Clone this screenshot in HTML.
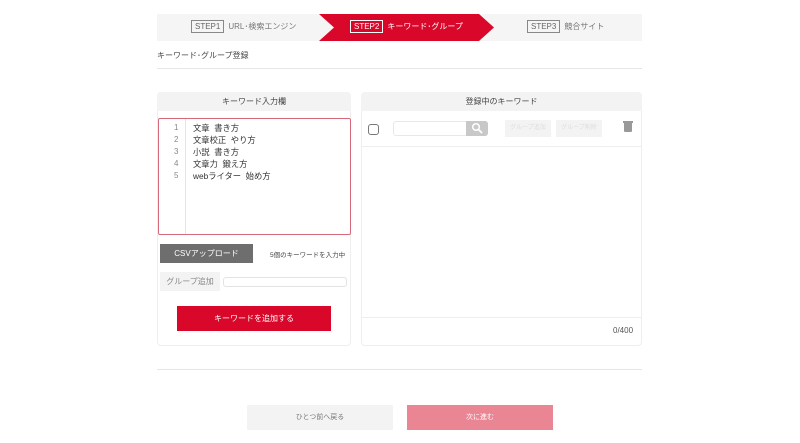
<html><head><style>
body{margin:0;width:800px;height:443px;background:#fff;font-family:"Liberation Sans","Noto Sans CJK JP",sans-serif;position:relative;overflow:hidden;color:#444}
.a{position:absolute;box-sizing:border-box}
.st{font-size:8px;display:flex;align-items:center;gap:4px}
.bx{border:1px solid #888;padding:1px 3px;font-size:8px;color:#666}
</style></head><body>
<div class="a" style="left:157px;top:14px;width:485px;height:27px;background:#f5f5f6"></div>
<svg class="a" style="left:319px;top:14px" width="176" height="27"><polygon points="0,0 160,0 175,13.5 160,27 0,27 15,13.5" fill="#d9072a"/></svg>
<div class="a st" style="left:191px;top:20px;color:#777"><span class="bx">STEP1</span>URL･検索エンジン</div>
<div class="a st" style="left:350px;top:20px;color:#fff"><span class="bx" style="border-color:#fff;color:#fff">STEP2</span>キーワード･グループ</div>
<div class="a st" style="left:527px;top:20px;color:#777"><span class="bx">STEP3</span>競合サイト</div>
<div class="a" style="left:157px;top:50px;font-size:8px;color:#444">キーワード･グループ登録</div>
<div class="a" style="left:157px;top:68px;width:485px;height:1px;background:#e6e6e6"></div>

<div class="a" style="left:157px;top:92px;width:194px;height:254px;border:1px solid #eee;border-radius:4px"></div>
<div class="a" style="left:157px;top:92px;width:194px;height:19px;background:#f3f3f4;border-radius:4px 4px 0 0;font-size:8px;text-align:center;line-height:19px">キーワード入力欄</div>
<div class="a" style="left:158px;top:118px;width:193px;height:117px;border:1px solid #d66a7a;border-radius:2px"></div>
<div class="a" style="left:185px;top:119px;width:1px;height:115px;background:#e4e4e4"></div>
<div class="a" style="left:174px;top:122px;font-size:8px;line-height:12px;color:#888;text-align:right">1<br>2<br>3<br>4<br>5</div>
<div class="a" style="left:193px;top:122px;font-size:8.3px;line-height:12px;color:#333;white-space:pre">文章  書き方
文章校正  やり方
小説  書き方
文章力  鍛え方
webライター  始め方</div>
<div class="a" style="left:160px;top:244px;width:93px;height:19px;background:#6e6e6e;color:#fff;font-size:8px;text-align:center;line-height:19px">CSVアップロード</div>
<div class="a" style="left:270px;top:249px;font-size:6.5px;color:#444">5個のキーワードを入力中</div>
<div class="a" style="left:160px;top:272px;width:60px;height:19px;background:#f3f3f4;color:#888;font-size:8px;text-align:center;line-height:19px">グループ追加</div>
<div class="a" style="left:223px;top:277px;width:124px;height:10px;border:1px solid #e3e3e3;border-radius:3px"></div>
<div class="a" style="left:177px;top:306px;width:154px;height:25px;background:#d9072a;color:#fff;font-size:8px;text-align:center;line-height:25px">キーワードを追加する</div>

<div class="a" style="left:361px;top:92px;width:281px;height:254px;border:1px solid #eee;border-radius:4px"></div>
<div class="a" style="left:361px;top:92px;width:281px;height:19px;background:#f3f3f4;border-radius:4px 4px 0 0;font-size:8px;text-align:center;line-height:19px">登録中のキーワード</div>
<div class="a" style="left:368px;top:124px;width:11px;height:11px;border:1px solid #777;border-radius:3px"></div>
<div class="a" style="left:393px;top:121px;width:95px;height:15px;border:1px solid #e8e8e8;border-radius:3px"></div>
<div class="a" style="left:466px;top:121px;width:22px;height:15px;background:#c8c8c8;border-radius:0 3px 3px 0"></div>
<svg class="a" style="left:471px;top:122px" width="12" height="12"><circle cx="5" cy="5" r="3.3" stroke="#fff" stroke-width="1.5" fill="none"/><line x1="7.5" y1="7.5" x2="11" y2="11" stroke="#fff" stroke-width="1.8"/></svg>
<div class="a" style="left:505px;top:120px;width:46px;height:17px;background:#f3f3f4;color:#ddd;font-size:6px;text-align:center;line-height:17px">グループ追加</div>
<div class="a" style="left:556px;top:120px;width:46px;height:17px;background:#f3f3f4;color:#ddd;font-size:6px;text-align:center;line-height:17px">グループ削除</div>
<div class="a" style="left:624px;top:123px;width:8px;height:9px;background:#999;border-radius:0 0 1px 1px"></div>
<div class="a" style="left:623px;top:121px;width:10px;height:1.5px;background:#999"></div>
<div class="a" style="left:362px;top:146px;width:279px;height:1px;background:#eee"></div>
<div class="a" style="left:362px;top:317px;width:279px;height:1px;background:#eee"></div>
<div class="a" style="left:613px;top:326px;font-size:8px;color:#555">0/400</div>

<div class="a" style="left:157px;top:369px;width:485px;height:1px;background:#e6e6e6"></div>
<div class="a" style="left:247px;top:405px;width:146px;height:25px;background:#f3f3f4;color:#777;font-size:7px;text-align:center;line-height:25px">ひとつ前へ戻る</div>
<div class="a" style="left:407px;top:405px;width:146px;height:25px;background:#ea8593;color:#fff;font-size:7px;text-align:center;line-height:25px">次に進む</div>
</body></html>
